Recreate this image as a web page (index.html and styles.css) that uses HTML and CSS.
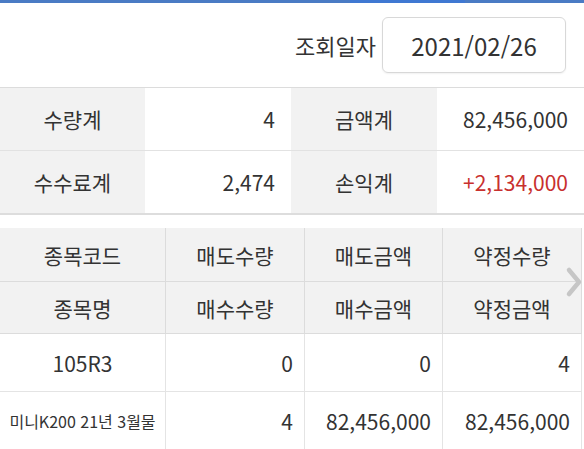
FILE: index.html
```html
<!DOCTYPE html>
<html lang="ko">
<head>
<meta charset="utf-8">
<link rel="stylesheet" href="styles.css">
</head>
<body>
<div class="topbar"><span class="tab-ind"></span></div>
<div class="daterow">
  <span class="date-label">조회일자</span>
  <div class="datebox">2021/02/26</div>
</div>
<div class="summary">
  <div class="s-label first">수량계</div>
  <div class="s-val first">4</div>
  <div class="s-label first">금액계</div>
  <div class="s-val first">82,456,000</div>
  <div class="s-label">수수료계</div>
  <div class="s-val">2,474</div>
  <div class="s-label">손익계</div>
  <div class="s-val red">+2,134,000</div>
</div>
<div class="table-wrap">
  <div class="grid head">
    <div class="c h1">종목코드</div>
    <div class="c h1">매도수량</div>
    <div class="c h1">매도금액</div>
    <div class="c h1">약정수량</div>
    <div class="c h2">종목명</div>
    <div class="c h2">매수수량</div>
    <div class="c h2">매수금액</div>
    <div class="c h2">약정금액</div>
  </div>
  <div class="grid body">
    <div class="c d center">105R3</div>
    <div class="c d num">0</div>
    <div class="c d num">0</div>
    <div class="c d num">4</div>
    <div class="c d center small">미니K200 21년 3월물</div>
    <div class="c d num">4</div>
    <div class="c d num">82,456,000</div>
    <div class="c d num">82,456,000</div>
  </div>
  <svg class="chev" width="20" height="32" viewBox="0 0 20 32"><polyline points="5,4 15,16 5,28" fill="none" stroke="#c6c6c6" stroke-width="4.5" stroke-linecap="round" stroke-linejoin="round"/></svg>
</div>
</body>
</html>
```

FILE: styles.css
```css
html, body {
  margin: 0;
  padding: 0;
  background: #fff;
}
body {
  width: 584px;
  height: 449px;
  overflow: hidden;
  font-family: "Noto Sans CJK KR", "Noto Sans", sans-serif;
  color: #333;
}
.topbar {
  height: 3px;
  background: #4a7bc4;
  position: relative;
}
.tab-ind {
  position: absolute;
  left: 350px;
  top: 0;
  width: 115px;
  height: 3px;
  background: #3f78d2;
}
.daterow {
  height: 85px;
  box-sizing: border-box;
  display: flex;
  align-items: center;
  justify-content: flex-end;
  padding-right: 18px;
  border-bottom: 1px solid #dcdcdc;
}
.date-label {
  font-size: 22px;
  margin-right: 6px;
  color: #333;
}
.datebox {
  width: 184px;
  height: 56px;
  box-sizing: border-box;
  border: 1px solid #d8d8d8;
  border-radius: 6px;
  display: flex;
  align-items: center;
  justify-content: center;
  font-size: 24px;
  color: #333;
  box-shadow: 0 1px 2px rgba(0,0,0,0.06);
}
.summary {
  display: grid;
  grid-template-columns: 145px 146px 146px 147px;
  grid-template-rows: 63px 62px;
  border-bottom: 2px solid #dddddd;
}
.s-label, .s-val {
  display: flex;
  align-items: center;
  font-size: 21px;
  box-sizing: border-box;
}
.first {
  border-bottom: 1px solid #e2e2e2;
}
.s-label {
  background: #f2f2f2;
  justify-content: center;
}
.s-val {
  background: #fff;
  justify-content: flex-end;
  padding-right: 16px;
}
.red {
  color: #c8302e;
}
.table-wrap {
  position: relative;
  margin-top: 13px;
}
.grid {
  display: grid;
  grid-template-columns: 166px 139px 138px 139px;
}
.c {
  display: flex;
  align-items: center;
  font-size: 21px;
  border-right: 1px solid #dcdcdc;
  border-bottom: 1px solid #dcdcdc;
  box-sizing: border-box;
}
.head .c {
  background: #f2f2f2;
  justify-content: center;
}
.h1 { height: 54px; }
.h2 { height: 52px; }
.body .c {
  border-right-color: #e4e4e4;
  border-bottom-color: #e4e4e4;
  height: 58px;
}
.center { justify-content: center; }
.num { justify-content: flex-end; padding-right: 11px; }
.body .small { font-size: 16px; }
.chev {
  position: absolute;
  right: 0;
  top: 38px;
}
```
